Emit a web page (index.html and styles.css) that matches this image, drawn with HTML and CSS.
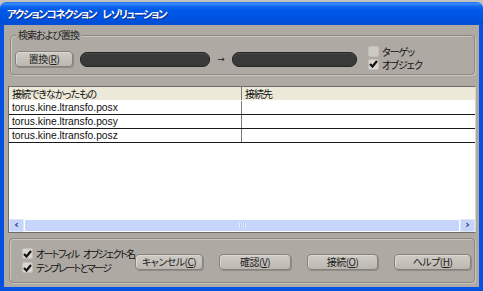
FILE: index.html
```html
<!DOCTYPE html>
<html lang="ja">
<head>
    <meta charset="UTF-8">
    <title>アクションコネクション レゾリューション</title>
    <link rel="stylesheet" href="styles.css">
</head>
<body>
    <div class="window">
        <div class="titlebar">
            <span class="title">アクションコネクション レゾリューション</span>
        </div>
        <div class="frame">
            <div class="client">

                <!-- search and replace -->
                <div class="group search">
                    <span class="group-label">検索および置換</span>
                    <button class="btn replace">置換(<u>R</u>)</button>
                    <div class="field field-from"></div>
                    <span class="arrow">→</span>
                    <div class="field field-to"></div>
                    <div class="checks">
                        <label class="check"><span class="box"></span>ターゲッ</label>
                        <label class="check"><span class="box on"><svg width="9" height="8" viewBox="0 0 9 8"><path d="M1 4 L3.5 6.5 L8 1" fill="none" stroke="#111" stroke-width="2.2"/></svg></span>オブジェク</label>
                    </div>
                </div>

                <!-- unresolved connections -->
                <div class="list">
                    <div class="rows">
                        <div class="row head">
                            <div class="cell col-src">接続できなかったもの</div>
                            <div class="cell col-dst">接続先</div>
                        </div>
                        <div class="row">
                            <div class="cell col-src latin">torus.kine.ltransfo.posx</div>
                            <div class="cell col-dst"></div>
                        </div>
                        <div class="row">
                            <div class="cell col-src latin">torus.kine.ltransfo.posy</div>
                            <div class="cell col-dst"></div>
                        </div>
                        <div class="row">
                            <div class="cell col-src latin">torus.kine.ltransfo.posz</div>
                            <div class="cell col-dst"></div>
                        </div>
                    </div>
                    <div class="hscroll">
                        <div class="sbtn">&lsaquo;</div>
                        <div class="thumb"><span class="grip"></span></div>
                        <div class="sbtn">&rsaquo;</div>
                    </div>
                </div>

                <!-- options and actions -->
                <div class="group actions">
                    <div class="checks">
                        <label class="check"><span class="box on"><svg width="9" height="8" viewBox="0 0 9 8"><path d="M1 4 L3.5 6.5 L8 1" fill="none" stroke="#111" stroke-width="2.2"/></svg></span>オートフィル オブジェクト名</label>
                        <label class="check"><span class="box on"><svg width="9" height="8" viewBox="0 0 9 8"><path d="M1 4 L3.5 6.5 L8 1" fill="none" stroke="#111" stroke-width="2.2"/></svg></span>テンプレートとマージ</label>
                    </div>
                    <button class="btn b-cancel">キャンセル(<u>C</u>)</button>
                    <button class="btn b-check">確認(<u>V</u>)</button>
                    <button class="btn b-connect">接続(<u>O</u>)</button>
                    <button class="btn b-help">ヘルプ(<u>H</u>)</button>
                </div>

            </div>
        </div>
    </div>
</body>
</html>
```

FILE: styles.css
```css
html, body {
    margin: 0;
    padding: 0;
}
body {
    background: #c4c2be;
    font-family: "Noto Sans CJK JP", "Liberation Sans", sans-serif;
    font-size: 10px;
    letter-spacing: -1px;
    font-feature-settings: "palt";
    color: #111;
}
.window {
    margin-top: 2px;
    width: 483px;
    height: 289px;
    display: flex;
    flex-direction: column;
}
/* Title bar */
.titlebar {
    height: 23px;
    flex: none;
    border-radius: 6px 6px 0 0;
    background: linear-gradient(#1c6ef4 0, #3d8ef8 2px, #136af2 4px, #0058e8 8px, #0054e4 16px, #004ed8 20px, #0a4fd2 23px);
    display: flex;
    align-items: center;
    padding-left: 7px;
}
.title {
    color: #fff;
    font-weight: bold;
    font-size: 10.5px;
    letter-spacing: -1.4px;
    word-spacing: 5px;
    text-shadow: 1px 1px 0 #0a2f8c;
}
.frame {
    flex: 1;
    border: 4px solid #0552e2;
    border-top: none;
    box-shadow: inset 1px 0 0 #2b70f0, inset -1px 0 0 #2b70f0;
    display: flex;
}
.client {
    flex: 1;
    background: #aeaaa3;
    display: flex;
    flex-direction: column;
    align-items: flex-start;
}
/* Group boxes */
.group {
    position: relative;
    box-sizing: border-box;
    border: 1px solid #8c8983;
    border-radius: 4px;
    box-shadow: 1px 1px 0 #cac6bf, inset 1px 1px 0 #cac6bf;
    display: flex;
    align-items: center;
}
.group-label {
    position: absolute;
    top: -7px;
    left: 5px;
    padding: 0 2px;
    background: #aeaaa3;
    line-height: 12px;
    color: #222;
}
.search {
    margin: 10px 0 0 6px;
    width: 465px;
    height: 40px;
    padding: 8px 0 0 4px;
}
.actions {
    margin: 5px 0 0 5px;
    width: 466px;
    height: 45px;
    padding: 2px 0 0 12px;
}
/* Buttons */
.btn {
    box-sizing: border-box;
    height: 16px;
    padding: 0;
    font: inherit;
    letter-spacing: -0.5px;
    line-height: 14px;
    white-space: nowrap;
    color: #222;
    background: linear-gradient(#cfcbc5, #bcb8b1);
    border: 1px solid #86837d;
    border-radius: 4px;
    box-shadow: inset 1px 1px 0 #dcd9d3, 1px 1px 0 #8f8c86;
}
.btn u {
    text-decoration-thickness: 1px;
}
.replace {
    width: 58px;
}
.b-cancel { width: 68px; }
.b-check { width: 72px; margin-left: 16px; }
.b-connect { width: 71px; margin-left: 16px; }
.b-help { width: 77px; margin-left: 16px; }
/* Dark text fields */
.field {
    box-sizing: border-box;
    height: 15px;
    background: #393939;
    border: 1px solid #252525;
    border-radius: 7px;
    box-shadow: inset 0 1px 0 #4a4a4a;
}
.field-from {
    width: 130px;
    margin-left: 7px;
}
.field-to {
    width: 125px;
}
.arrow {
    width: 22px;
    text-align: center;
    font-family: "DejaVu Sans", sans-serif;
    font-size: 9px;
    letter-spacing: 0;
    color: #222;
}
/* Checkboxes */
.checks {
    display: flex;
    flex-direction: column;
}
.search .checks {
    margin-left: 11px;
    margin-top: -3px;
}
.actions .checks {
    width: 113px;
    gap: 1px;
    margin-top: -2px;
}
.actions .check {
    letter-spacing: -1.6px;
    word-spacing: 4px;
}
.check {
    display: flex;
    align-items: center;
    gap: 3px;
    height: 13px;
    line-height: 13px;
    white-space: nowrap;
}
.box {
    box-sizing: border-box;
    flex: none;
    width: 11px;
    height: 11px;
    border: 1px solid #c2beb8;
    border-radius: 2px;
    background: #cdc9c3;
    display: flex;
    align-items: center;
    justify-content: center;
}
.box.on {
    background: #d9d6d1;
}
/* List */
.list {
    margin: 11px 0 0 4px;
    width: 468px;
    height: 147px;
    box-sizing: border-box;
    border: 1px solid #6e6c68;
    border-right-color: #d8d5d0;
    background: #fff;
    display: flex;
    flex-direction: column;
}
.rows {
    flex: 1;
}
.row {
    display: flex;
    height: 13px;
    border-bottom: 1px solid #1a1a1a;
}
.row.head {
    background: #ece9d8;
    border-bottom: 1px solid #fff;
}
.cell {
    line-height: 13px;
    padding-left: 3px;
    white-space: nowrap;
    overflow: hidden;
}
.col-src {
    width: 229px;
    border-right: 1px solid #7a7a7a;
}
.col-dst {
    flex: 1;
}
.latin {
    font-family: "Liberation Sans", sans-serif;
    font-size: 10.3px;
    letter-spacing: 0;
    color: #111;
}
/* Horizontal scrollbar */
.hscroll {
    height: 13px;
    display: flex;
    background: #eef3fe;
}
.sbtn {
    box-sizing: border-box;
    width: 15px;
    background: #c5d4fa;
    border: 1px solid #dfe6f7;
    border-radius: 2px;
    color: #1f3a7a;
    font-family: "DejaVu Sans", sans-serif;
    font-weight: bold;
    font-size: 11px;
    letter-spacing: 0;
    line-height: 10px;
    text-align: center;
}
.thumb {
    flex: 1;
    box-sizing: border-box;
    background: #c6d5fb;
    border: 1px solid #ffffff;
    border-radius: 2px;
    display: flex;
    align-items: center;
    justify-content: center;
}
.grip {
    width: 7px;
    height: 5px;
    background: repeating-linear-gradient(90deg, #e6edfd 0 1px, #b3c6f5 1px 2px);
}
```
